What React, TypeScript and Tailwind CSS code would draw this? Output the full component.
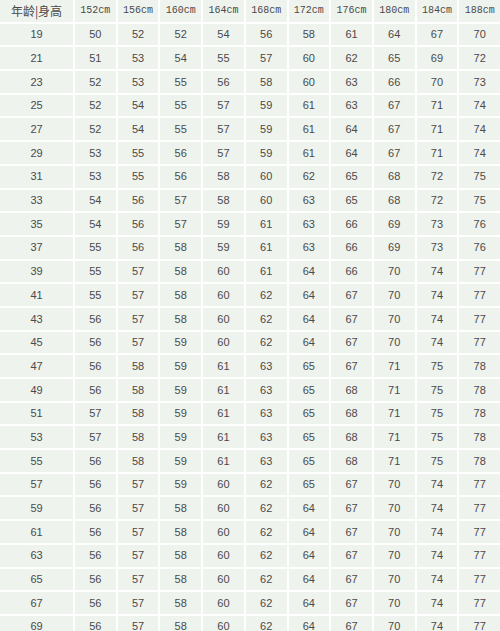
import React from 'react';

const heights = ['152cm', '156cm', '160cm', '164cm', '168cm', '172cm', '176cm', '180cm', '184cm', '188cm'];

const rows: [number, number[]][] = [
  [19, [50, 52, 52, 54, 56, 58, 61, 64, 67, 70]],
  [21, [51, 53, 54, 55, 57, 60, 62, 65, 69, 72]],
  [23, [52, 53, 55, 56, 58, 60, 63, 66, 70, 73]],
  [25, [52, 54, 55, 57, 59, 61, 63, 67, 71, 74]],
  [27, [52, 54, 55, 57, 59, 61, 64, 67, 71, 74]],
  [29, [53, 55, 56, 57, 59, 61, 64, 67, 71, 74]],
  [31, [53, 55, 56, 58, 60, 62, 65, 68, 72, 75]],
  [33, [54, 56, 57, 58, 60, 63, 65, 68, 72, 75]],
  [35, [54, 56, 57, 59, 61, 63, 66, 69, 73, 76]],
  [37, [55, 56, 58, 59, 61, 63, 66, 69, 73, 76]],
  [39, [55, 57, 58, 60, 61, 64, 66, 70, 74, 77]],
  [41, [55, 57, 58, 60, 62, 64, 67, 70, 74, 77]],
  [43, [56, 57, 58, 60, 62, 64, 67, 70, 74, 77]],
  [45, [56, 57, 59, 60, 62, 64, 67, 70, 74, 77]],
  [47, [56, 58, 59, 61, 63, 65, 67, 71, 75, 78]],
  [49, [56, 58, 59, 61, 63, 65, 68, 71, 75, 78]],
  [51, [57, 58, 59, 61, 63, 65, 68, 71, 75, 78]],
  [53, [57, 58, 59, 61, 63, 65, 68, 71, 75, 78]],
  [55, [56, 58, 59, 61, 63, 65, 68, 71, 75, 78]],
  [57, [56, 57, 59, 60, 62, 65, 67, 70, 74, 77]],
  [59, [56, 57, 58, 60, 62, 64, 67, 70, 74, 77]],
  [61, [56, 57, 58, 60, 62, 64, 67, 70, 74, 77]],
  [63, [56, 57, 58, 60, 62, 64, 67, 70, 74, 77]],
  [65, [56, 57, 58, 60, 62, 64, 67, 70, 74, 77]],
  [67, [56, 57, 58, 60, 62, 64, 67, 70, 74, 77]],
  [69, [56, 57, 58, 60, 62, 64, 67, 70, 74, 77]],
];

const cell = 'bg-[#eff3ee] flex items-center justify-center';
const num = `${cell} text-[11px] [font-family:'Liberation_Sans',Arial,sans-serif]`;

export default function App() {
  return (
    <div className="w-[500px] h-[631px] overflow-hidden bg-white text-[#4a4a4a]">
      <div className="grid grid-cols-[73px_repeat(10,1fr)] gap-[2px] auto-rows-[21.7px]">
        <div className={`${cell} text-[12px] [font-family:'Noto_Sans_CJK_SC',sans-serif]`}>年龄|身高</div>
        {heights.map(h => (
          <div key={h} className={`${cell} text-[10px] [font-family:'Liberation_Mono',monospace]`}>{h}</div>
        ))}
        {rows.map(([age, vals]) => (
          <React.Fragment key={age}>
            <div className={num}>{age}</div>
            {vals.map((v, i) => (
              <div key={i} className={num}>{v}</div>
            ))}
          </React.Fragment>
        ))}
      </div>
    </div>
  );
}
